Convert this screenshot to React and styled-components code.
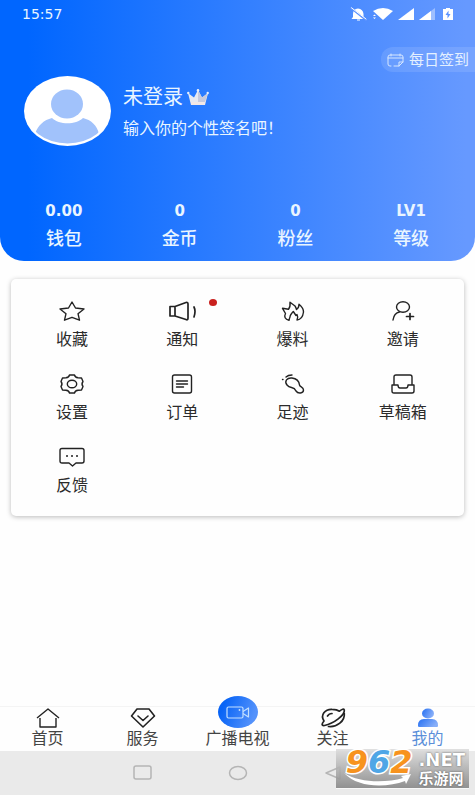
import React, { useState } from "react";
import styled, { createGlobalStyle } from "styled-components";

const GlobalStyle = createGlobalStyle`
  * {
    box-sizing: border-box;
  }
  body {
    margin: 0;
    background: #fefefe;
    font-family: Roboto, "Noto Sans CJK SC", sans-serif;
  }
  button {
    font-family: inherit;
    border: none;
    background: none;
    padding: 0;
    cursor: pointer;
  }
  svg {
    display: block;
    flex-shrink: 0;
  }
`;

const Page = styled.div`
  min-height: 100vh;
  display: flex;
  flex-direction: column;
`;

const Header = styled.header`
  padding-bottom: 10px;
  color: #e9f5ff;
  border-radius: 0 0 24px 24px;
  background: linear-gradient(90deg, #0066ff 6%, #6699ff 98%);
`;

const StatusBar = styled.div`
  height: 28px;
  padding: 0 20px 0 22px;
  display: flex;
  align-items: center;
  justify-content: space-between;
  font-family: "DejaVu Sans", sans-serif;
  font-size: 14px;
`;

const StatusIcons = styled.div`
  display: flex;
  align-items: center;
  gap: 5px;
`;

const SignIn = styled.button`
  margin: 19px 0 0 auto;
  height: 25px;
  padding: 0 6px;
  display: flex;
  align-items: center;
  gap: 5px;
  border-radius: 12px 0 0 12px;
  background: #ffffff1c;
  color: #e4f0ff;
  font-size: 15px;
  line-height: 24px;
`;

const Profile = styled.div`
  padding: 4px 24px 0;
  display: flex;
  gap: 11px;
`;

const ProfileText = styled.div`
  padding-top: 9px;
`;

const Name = styled.h1`
  margin: 0;
  display: flex;
  align-items: center;
  gap: 4px;
  font-size: 20px;
  font-weight: 400;
  line-height: 24px;
`;

const Signature = styled.p`
  margin: 8px 0 0;
  font-size: 16px;
  line-height: 24px;
`;

const Stats = styled.div`
  margin-top: 52px;
  padding: 0 6px;
  display: grid;
  grid-template-columns: repeat(4, 1fr);
`;

const Stat = styled.button`
  display: flex;
  flex-direction: column;
  align-items: center;
  gap: 3px;
  color: #e9f5ff;
  font-size: 18px;
  font-weight: 500;
  line-height: 24px;
`;

const StatValue = styled.span`
  font-family: "DejaVu Sans", sans-serif;
  font-size: 15px;
  font-weight: 700;
  line-height: 25px;
`;

const Card = styled.main`
  margin: 18px 11px 0;
  padding: 21px 6px 17px;
  display: grid;
  grid-template-columns: repeat(4, 1fr);
  row-gap: 20px;
  border-radius: 5px;
  background: #fefefe;
  box-shadow: 0 1px 5px #00000045;
`;

const MenuItem = styled.button`
  position: relative;
  display: flex;
  flex-direction: column;
  align-items: center;
  gap: 5px;
  color: #2b2b2b;
  font-size: 16px;
  line-height: 26px;
`;

const Dot = styled.span`
  position: absolute;
  top: -1px;
  left: calc(50% + 27px);
  width: 8px;
  height: 7px;
  border-radius: 50%;
  background: #c9211e;
`;

const Footer = styled.footer`
  position: relative;
  margin-top: auto;
`;

const TabBar = styled.nav`
  display: grid;
  grid-template-columns: repeat(5, 1fr);
  align-items: end;
  border-top: 1px solid #f4f4f4;
`;

const Tab = styled.button`
  height: 44px;
  padding-bottom: 2px;
  display: flex;
  flex-direction: column;
  align-items: center;
  justify-content: flex-end;
  color: ${props => (props.$active ? "#5b8fd9" : "#444")};
  font-size: 16px;
  line-height: 20px;
  white-space: nowrap;
`;

const SystemBar = styled.div`
  height: 44px;
  display: grid;
  grid-template-columns: repeat(5, 1fr);
  justify-items: center;
  align-items: center;
  background: #eaeaea;
`;

const SystemButton = styled.button`
  grid-column: ${props => props.$column};
`;

const Watermark = styled.div`
  position: absolute;
  right: 6px;
  bottom: 6px;
  height: 40px;
  padding: 0 4px 0 10px;
  display: flex;
  gap: 6px;
  color: #fff;
  font-family: "DejaVu Sans", "Noto Sans CJK SC", sans-serif;
  font-weight: 700;
  border-bottom: 1px solid #f8f8f8;
  background: linear-gradient(#dcdcdce0, #858585e0);
`;

const Digits = styled.span`
  font-size: 32px;
  font-style: italic;
  line-height: 26px;
  -webkit-text-stroke: 3px #fff;
  paint-order: stroke fill;
`;

const Digit = styled.span`
  color: ${props => props.$color};
`;

const SiteName = styled.span`
  display: flex;
  flex-direction: column;
  font-size: 15px;
  line-height: 16px;
  text-shadow: 0 0 2px #555;
`;

const Domain = styled.span`
  font-size: 18px;
  line-height: 22px;
`;

const Swoosh = styled.svg`
  position: absolute;
  left: 8px;
  bottom: 1px;
`;

const Icon = ({ width = 26, height = 22, children, ...rest }) => (
  <svg
    width={width}
    height={height}
    viewBox={`0 0 ${width} ${height}`}
    fill="none"
    stroke="#222"
    strokeWidth="1.4"
    strokeLinecap="round"
    strokeLinejoin="round"
    aria-hidden="true"
    {...rest}
  >
    {children}
  </svg>
);

const Avatar = () => (
  <svg width="88" height="71" viewBox="0 0 88 71" aria-hidden="true">
    <defs>
      <clipPath id="face">
        <ellipse cx="43.5" cy="35" rx="41.5" ry="32.5" />
      </clipPath>
    </defs>
    <ellipse cx="43.5" cy="35" rx="43.5" ry="35" fill="#fff" />
    <g clipPath="url(#face)" fill="#a1c2fb">
      <ellipse cx="43" cy="28" rx="16" ry="14.5" />
      <path d="M11 58C14 49 20 44 28 42C35 49 52 49 59 42C67 44 73 49 75 58C65 68 53 68 43 68C30 68 19 65 11 58Z" />
    </g>
  </svg>
);

const Crown = () => (
  <svg width="22" height="17" viewBox="0 0 22 17" aria-hidden="true">
    <path d="M1 4L7 8.500L11 1L15 8.500L21 4L18 16H4Z" fill="#e6e9f2" />
    <path d="M11 1L15 8.500L21 4L18 13H11Z" fill="#c6cade" />
    <path d="M4 13H18V16H4Z" fill="#f3e8e6" />
    <g fill="#e9f0fc">
      <circle cx="1.3" cy="4" r="1.2" />
      <circle cx="11" cy="1.4" r="1.3" />
      <circle cx="20.7" cy="4" r="1.2" />
    </g>
  </svg>
);

const VideoBadge = () => (
  <svg width="40" height="33" viewBox="0 0 40 33" aria-hidden="true">
    <defs>
      <linearGradient id="badge" x1="0" y1="0" x2="1" y2="0.3">
        <stop offset="0.2" stopColor="#0864f6" />
        <stop offset="1" stopColor="#5492fb" />
      </linearGradient>
    </defs>
    <ellipse cx="20" cy="16" rx="20" ry="16" fill="url(#badge)" />
    <g fill="none" stroke="#c3e0ff" strokeWidth="1.2" strokeLinejoin="round">
      <rect x="9" y="11" width="16" height="11" rx="1.5" />
      <path d="M25 15.500L30.500 12V21L25 17.500" />
    </g>
    <circle cx="21.5" cy="14" r="0.9" fill="#c3e0ff" />
  </svg>
);

const stats = [
  { value: "0.00", label: "钱包" },
  { value: "0", label: "金币" },
  { value: "0", label: "粉丝" },
  { value: "LV1", label: "等级" },
];

const menu = [
  {
    label: "收藏",
    icon: <Icon><path d="M13 2L16.5 8L25 9L19 13.7L20.5 20.2L13 17.3L5.5 20.2L7 13.7L1 9L9.5 8Z" /></Icon>,
  },
  {
    label: "通知",
    unread: true,
    icon: (
      <Icon width={28} strokeWidth="1.7">
        <path d="M2 6.5H7V16H2ZM7 6.5L18 2.5Q20 2 20 4V18Q20 20.5 18 19.5L7 16M26 7Q28 11 26 17" />
      </Icon>
    ),
  },
  {
    label: "爆料",
    icon: (
      <Icon>
        <path d="M9 20.300Q3 18.500 5.500 13.500L2.500 8.300L8.500 9.300Q10.500 7 10 2.300L15 6Q16 7.500 16.500 9.500Q19 8 19 4.300Q23.500 8 23.500 12Q22.500 19.500 17 20Q18.500 17 17 14.500L16 15.500L13.300 11.500Q10 15 10 17Q9.500 18 9 20.300Z" />
      </Icon>
    ),
  },
  {
    label: "邀请",
    icon: (
      <Icon>
        <ellipse cx="13" cy="7" rx="6.500" ry="5.300" />
        <path d="M3 20Q4 13 9.500 12" />
        <path d="M16.500 16.500H23.500M20 13.500V19.500" strokeWidth="1.7" />
      </Icon>
    ),
  },
  {
    label: "设置",
    icon: (
      <Icon>
        <path d="M10.500 2H15.500Q16 4.500 19 4.800L22.500 5L24 8.500Q22 11 24 13.500L22.500 17L19 17.200Q16 17.500 15.500 20H10.500Q10 17.500 7 17.200L3.500 17L2 13.500Q4 11 2 8.500L3.500 5L7 4.800Q10 4.500 10.500 2Z" />
        <ellipse cx="13" cy="11" rx="4.700" ry="3.800" />
      </Icon>
    ),
  },
  {
    label: "订单",
    icon: (
      <Icon>
        <rect x="3.500" y="2" width="19" height="18" rx="2" />
        <path d="M7.500 8H18.500M7.500 11H18.500M7.500 14H14.500" />
      </Icon>
    ),
  },
  {
    label: "足迹",
    icon: (
      <Icon>
        <path d="M7 12C4 8 7 4.500 12 5C17 5.500 19 8 19.500 12C20 14 23.500 14 23.500 17C23.500 20.500 18 21 16 18C15 15.500 14 15 11.500 14.500Q8.500 14 7 12Z" />
        <path d="M6 4Q8 2 12 2M2.500 6.500H3" />
      </Icon>
    ),
  },
  {
    label: "草稿箱",
    icon: (
      <Icon>
        <path d="M4 11V4Q4 2 6 2H20Q22 2 22 4V11M2 12H8Q8 15 10 15H16Q18 15 18 12H24V18Q24 20 22 20H4Q2 20 2 18Z" />
      </Icon>
    ),
  },
  {
    label: "反馈",
    icon: (
      <Icon>
        <path d="M3 2.500H23Q25 2.500 25 4.500V15Q25 17 23 17H17L13.500 20L10 17H3Q1 17 1 15V4.500Q1 2.500 3 2.500Z" />
        <path d="M8 10H8.010M13 10H13.010M18 10H18.010" strokeWidth="2" />
      </Icon>
    ),
  },
];

const tabs = [
  {
    label: "首页",
    icon: <Icon><path d="M2 11L13 2L24 11M5 11V20H21V11" strokeLinecap="butt" /></Icon>,
  },
  {
    label: "服务",
    icon: <Icon strokeWidth="1.6"><path d="M7 2H19L24.500 9L13 20L1.500 9ZM8 9L13 13.500L18 9" /></Icon>,
  },
  { label: "广播电视", icon: <VideoBadge /> },
  {
    label: "关注",
    icon: (
      <Icon strokeWidth="1.7">
        <path d="M4 14C0 8 5 2 12 2.300Q17 2.300 19.500 4.200Q23.500 1 24.300 3C25 8 14 16.500 4.500 18.500Q0 19 4 14Z" />
        <path d="M24.300 6.500C25 14 17 20.500 8.500 19.500M7.500 9Q9 6.500 12 6.500" />
      </Icon>
    ),
  },
  {
    label: "我的",
    icon: (
      <Icon stroke="none">
        <defs>
          <linearGradient id="me" x1="0" y1="0" x2="1" y2="0.4">
            <stop stopColor="#246ff2" />
            <stop offset="1" stopColor="#87aef8" />
          </linearGradient>
        </defs>
        <ellipse cx="13" cy="6.500" rx="6" ry="5" fill="url(#me)" />
        <path d="M3 18.500Q3 12 9 12H17Q23 12 23 18.500Q23 20 22 20H4Q3 20 3 18.500Z" fill="url(#me)" />
      </Icon>
    ),
  },
];

export default function App() {

  const [activeTab, setActiveTab] = useState("我的")

  return (
    <Page>
      <GlobalStyle />
      <Header>
        <StatusBar>
          <time>15:57</time>
          <StatusIcons>
            <Icon width={17} height={14} stroke="none" fill="#fff">
              <path d="M3 10V7Q3 2 8 1.500Q13 2 13.500 7V10L15 12H1.500ZM7 12.500H10V13.500H7Z" />
              <path d="M1 1L16 13" stroke="#5c93ff" strokeWidth="2" />
              <path d="M1.500 0.800L16 12" stroke="#fff" strokeWidth="1" />
            </Icon>
            <Icon width={21} height={14} stroke="none" fill="#fff">
              <path d="M1 4Q11 -2 21 4L11 13Z" />
              <path d="M1 9H4L2.500 7.500ZM1 10.500H4L2.500 12Z" />
            </Icon>
            <Icon width={16} height={14} stroke="none" fill="#fff"><path d="M0 13L16 1V13Z" /></Icon>
            <Icon width={16} height={14} stroke="none" fill="#fff">
              <path d="M0 13L16 1V13Z" fillOpacity="0.4" />
              <path d="M0 13L12 4V13Z" />
            </Icon>
            <Icon width={15} height={14} stroke="none" fill="#fff">
              <path d="M3 2H6V1H10V2H13V13H3Z" />
              <path d="M8.500 3.500L5.500 8H7.500V11.500L10.500 7H8.500Z" fill="#5c93ff" />
            </Icon>
          </StatusIcons>
        </StatusBar>
        <SignIn>
          <Icon width={17} height={14} stroke="#d5e6ff" strokeWidth="1">
            <path d="M4 13H3Q1 13 1 11V4Q1 2 3 2H14Q16 2 16 4V9L12 13H7M1 5H16M4 1V3M13 1V3M12 13V9H16" />
          </Icon>
          每日签到
        </SignIn>
        <Profile>
          <Avatar />
          <ProfileText>
            <Name>未登录<Crown /></Name>
            <Signature>输入你的个性签名吧！</Signature>
          </ProfileText>
        </Profile>
        <Stats>
          {stats.map(stat => (
            <Stat key={stat.label}>
              <StatValue>{stat.value}</StatValue>
              {stat.label}
            </Stat>
          ))}
        </Stats>
      </Header>
      <Card>
        {menu.map(item => (
          <MenuItem key={item.label}>
            {item.icon}
            {item.label}
            {item.unread && <Dot />}
          </MenuItem>
        ))}
      </Card>
      <Footer>
        <TabBar>
          {tabs.map(tab => (
            <Tab key={tab.label} $active={tab.label === activeTab} onClick={() => setActiveTab(tab.label)}>
              {tab.icon}
              {tab.label}
            </Tab>
          ))}
        </TabBar>
        <SystemBar>
          <SystemButton $column={2} aria-label="Recent apps">
            <Icon width={20} height={16} stroke="#b5b5b5" strokeWidth="1.5"><rect x="1" y="1" width="17" height="13" rx="2" /></Icon>
          </SystemButton>
          <SystemButton $column={3} aria-label="Home">
            <Icon width={20} height={16} stroke="#b5b5b5" strokeWidth="1.5"><ellipse cx="10" cy="8" rx="8.500" ry="6.500" /></Icon>
          </SystemButton>
          <SystemButton $column={4} aria-label="Back">
            <Icon width={20} height={16} stroke="#b5b5b5" strokeWidth="1.5"><path d="M17 2V14L3 8Z" /></Icon>
          </SystemButton>
        </SystemBar>
        <Watermark>
          <Digits>
            <Digit $color="#f7931e">9</Digit>
            <Digit $color="#4fa6e6">6</Digit>
            <Digit $color="#f7931e">2</Digit>
          </Digits>
          <SiteName>
            <Domain>.NET</Domain>
            乐游网
          </SiteName>
          <Swoosh width="68" height="14" viewBox="0 0 68 14" aria-hidden="true">
            <path d="M0 0C15 10 42 10 59 5L57 3L67 1L62 11L61 8C42 15 14 15 0 0Z" fill="#fff" />
          </Swoosh>
        </Watermark>
      </Footer>
    </Page>
  );
}
